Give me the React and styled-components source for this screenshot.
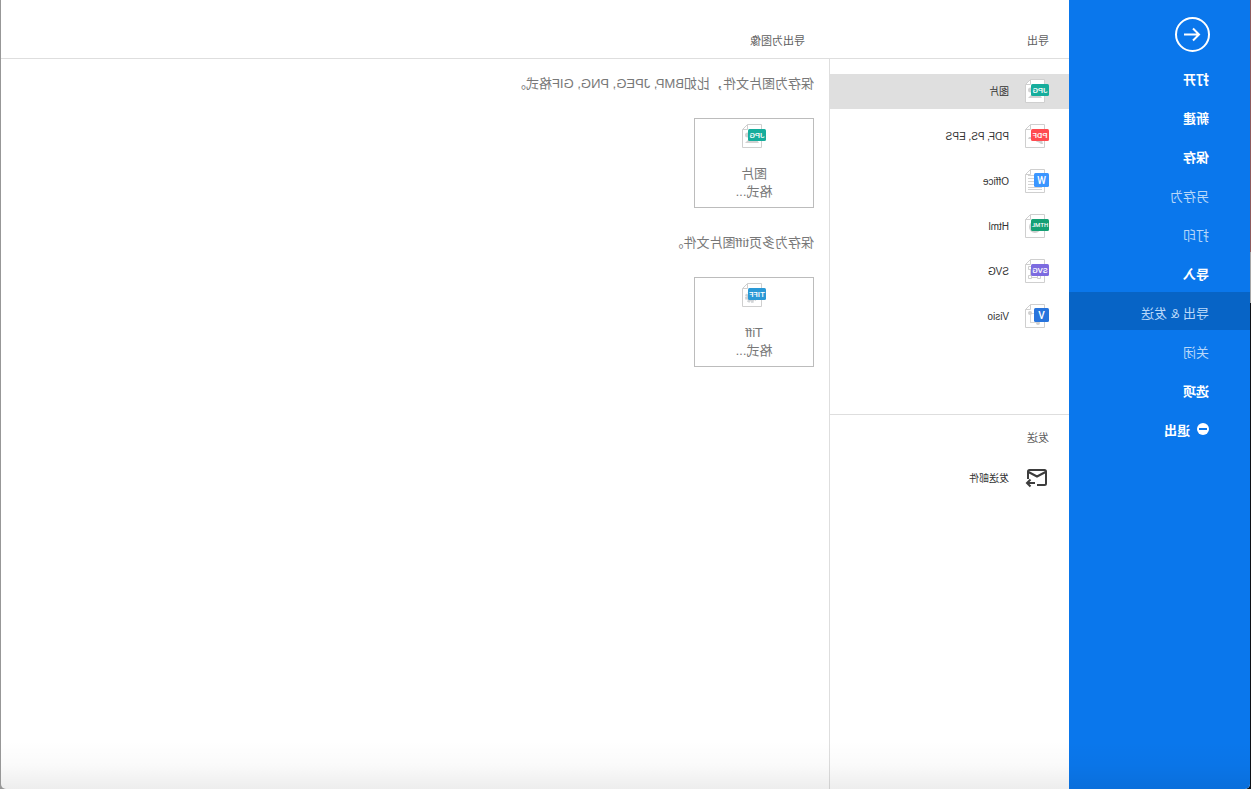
import React, { useState } from 'react';
import styled, { createGlobalStyle } from 'styled-components';

const Global = createGlobalStyle`
    * {
        box-sizing: border-box;
    }
    body {
        margin: 0;
        background: #fff;
        font-family: "Liberation Sans", "Noto Sans CJK SC", sans-serif;
        font-variant-ligatures: none;
    }
    button {
        margin: 0;
        border: 0;
        background: none;
        font-family: inherit;
        text-align: left;
        cursor: pointer;
    }
    h2, p {
        margin: 0;
        font-weight: 400;
    }
`

// the whole window is flipped horizontally
const Desktop = styled.div`
    min-height: 100vh;
    padding: 0 1px;
    display: flex;
    transform: scaleX(-1);
    background:
        linear-gradient(#8e5a5c 0 252px, #a5a5a5 252px 303px, #101216 303px) left / 50% 100% no-repeat,
        #979797;
`

const Window = styled.div`
    flex: 1;
    display: grid;
    grid-template-columns: 181px 240px 1fr;
    grid-template-rows: 59px 1fr;
    position: relative;
    background: #fff;
    border-radius: 0 0 5px 5px;
    overflow: hidden;

    &::after {
        content: "";
        position: absolute;
        left: 0;
        right: 0;
        bottom: 0;
        height: 48px;
        background: linear-gradient(rgba(0, 0, 0, 0), rgba(0, 0, 0, 0.02) 50%, rgba(0, 0, 0, 0.07));
        pointer-events: none;
    }
`

const Sidebar = styled.nav`
    grid-row: 1 / 3;
    padding-top: 17px;
    background: #0a77ec;
    display: flex;
    flex-direction: column;
`

const BackButton = styled.button`
    width: 36px;
    height: 36px;
    margin: 0 0 5px 40px;
    padding: 0;

    svg {
        display: block;
    }
`

const Menu = styled.ul`
    list-style: none;
    margin: 0;
    padding: 0;
    display: flex;
    flex-direction: column;
    gap: 1px;
`

const MenuButton = styled.button`
    width: 100%;
    height: 38px;
    padding: 6px 0 0 41px;
    display: flex;
    align-items: center;
    gap: 6px;
    font-size: 13px;
    line-height: 18px;
    font-weight: ${({ $strong }) => ($strong ? 700 : 400)};
    color: ${({ $strong }) => ($strong ? '#fff' : '#b9d8f9')};
    background: ${({ $active }) => ($active ? '#0764c6' : 'transparent')};
`

const HeadCell = styled.header`
    padding: ${({ $wide }) => ($wide ? '33px 24px 0' : '33px 20px 0')};
    border-bottom: 1px solid #dedede;
`

const Heading = styled.h2`
    font-size: 11px;
    line-height: 16px;
    color: #606060;
`

const Column = styled.aside`
    border-right: 1px solid #dedede;
`

const ExportSection = styled.section`
    min-height: 355px;
    padding-top: 15px;
    display: flex;
    flex-direction: column;
    gap: 10px;
`

const SendSection = styled.section`
    border-top: 1px solid #dedede;
    padding-top: 15px;
    display: flex;
    flex-direction: column;
    gap: 15px;

    ${Heading} {
        padding-left: 20px;
    }
`

const Row = styled.button`
    width: 100%;
    height: 35px;
    padding: 0 20px 1px;
    display: flex;
    align-items: center;
    gap: 16px;
    font-size: 10px;
    line-height: 17px;
    color: #333;
    background: ${({ $active }) => ($active ? '#dfdfdf' : 'transparent')};
`

const Content = styled.main`
    padding: 16px 15px;
`

const Group = styled.section`
    margin-bottom: 26px;
`

const Description = styled.p`
    margin-bottom: 25px;
    font-size: 13px;
    line-height: 18px;
    color: #787878;
`

const Card = styled.button`
    width: 120px;
    height: 90px;
    padding: 5px 0 0;
    border: 1px solid #bcbcbc;
    display: flex;
    flex-direction: column;
    align-items: center;
    gap: 17px;
    font-size: 13px;
    line-height: 18px;
    text-align: center;
    color: #787878;
`

const CardLabel = styled.span`
    white-space: pre-line;
`

const BadgeText = styled.text`
    font-family: Roboto, sans-serif;
    font-size: ${({ $size }) => $size}px;
    font-weight: 500;
    text-anchor: middle;
    fill: #fff;
`

const badges = {
    jpg: { text: 'JPG', color: '#16ad9c', size: 8 },
    pdf: { text: 'PDF', color: '#ff4b50', size: 8 },
    word: { text: 'W', color: '#3b96ff', size: 10, square: true },
    html: { text: 'HTML', color: '#15a074', size: 6 },
    svg: { text: 'SVG', color: '#7c6be0', size: 8 },
    visio: { text: 'V', color: '#2874dc', size: 10, square: true },
    tiff: { text: 'TIFF', color: '#2a99d6', size: 8 },
};

const drawings = {
    jpg: (
        <g fill="#d2d2d2">
            <path d="M7 19l2-3h9l3 3z" />
            <circle cx="18.500" cy="11" r="2.500" />
        </g>
    ),
    pdf: (
        <g fill="#cfcfcf">
            <path d="M17 13h3l1 2h-4z" />
            <path d="M6 20l1-4h5l1 1.500-3 1-2 1.500z" />
        </g>
    ),
    word: <path d="M14 6.500h7M14 9.500h7M14 12.500h7M14 15.500h7M7 18.500h14M7 20.500h14" stroke="#d4d4d4" />,
    html: <circle cx="14" cy="13" r="5" fill="#e4e4e4" stroke="#cfcfcf" strokeWidth="2" />,
    svg: (
        <g fill="#fff" stroke="#cfcfcf">
            <path d="M9 18.500h10M18.500 8v10" />
            <path d="M8.500 16.500h3v3h-3zM17.500 16.500h3v3h-3zM17.500 7.500h3v3h-3z" />
        </g>
    ),
    visio: (
        <g fill="#cfcfcf">
            <path d="M18.500 9v9M12 18.500h7M12 9.500h7" fill="none" stroke="#d8d8d8" />
            <circle cx="19" cy="9" r="2" />
            <circle cx="11" cy="19" r="2" />
        </g>
    ),
    tiff: (
        <g>
            <circle cx="15" cy="14" r="5" fill="none" stroke="#cfd2d5" strokeWidth="2" strokeDasharray="2.500 1.430" />
            <circle cx="15" cy="14" r="4.500" fill="#cfd2d5" />
        </g>
    ),
};

const FileIcon = ({ kind }) => {
    const { text, color, size, square } = badges[kind];
    return (
        <svg width="24" height="24" viewBox="0 0 24 24" aria-hidden="true">
            <path d="M4.500.500h14l5 5v18h-19z" fill="#fff" stroke="#cfcfcf" />
            <path d="M18.500.500v5h5" fill="none" stroke="#cfcfcf" />
            {drawings[kind]}
            <rect
                x="0"
                y={square ? 4 : 5}
                width={square ? 15 : 18}
                height={square ? 14 : 12}
                rx="1.500"
                fill={color}
            />
            <BadgeText $size={size} x={square ? 7.5 : 9} y={square ? 14.5 : size === 6 ? 13 : 14}>
                {text}
            </BadgeText>
        </svg>
    );
};

const BackIcon = () => (
    <svg width="36" height="36" viewBox="0 0 36 36" fill="none" stroke="#fff" strokeWidth="2" aria-hidden="true">
        <circle cx="17.500" cy="17.500" r="16.500" />
        <path d="M26 17.500H11M17 11.500l-6 6 6 6" />
    </svg>
);

const ExitIcon = () => (
    <svg width="13" height="16" viewBox="0 0 13 16" aria-hidden="true">
        <circle cx="6" cy="6" r="6" fill="#fff" />
        <path d="M2 6h8" stroke="#0a77ec" strokeWidth="2" />
    </svg>
);

const MailIcon = () => (
    <svg width="24" height="24" viewBox="0 0 24 24" fill="none" stroke="#3d3d3d" strokeWidth="2" aria-hidden="true">
        <path d="M21 13V5.500Q21 4 19.500 4h-15Q3 4 3 5.500v12Q3 19 4.500 19H12" />
        <path d="M3.500 6l8.500 4.500L20.500 6" />
        <path d="M14 17h8M18.500 13.500L22 17l-3.500 3.500" />
    </svg>
);

const menu = [
    { label: '打开', strong: true },
    { label: '新建', strong: true },
    { label: '保存', strong: true },
    { label: '另存为' },
    { label: '打印' },
    { label: '导入', strong: true },
    { label: '导出 & 发送', active: true },
    { label: '关闭' },
    { label: '选项', strong: true },
    { label: '退出', strong: true, icon: <ExitIcon /> },
];

const formats = [
    { kind: 'jpg', label: '图片' },
    { kind: 'pdf', label: 'PDF, PS, EPS' },
    { kind: 'word', label: 'Office' },
    { kind: 'html', label: 'Html' },
    { kind: 'svg', label: 'SVG' },
    { kind: 'visio', label: 'Visio' },
];

const groups = [
    { kind: 'jpg', description: '保存为图片文件，比如BMP, JPEG, PNG, GIF格式。', label: '图片\n格式...' },
    { kind: 'tiff', description: '保存为多页tiff图片文件。', label: 'Tiff\n格式...' },
];

const App = () => {
    const [format, setFormat] = useState('jpg');

    return (
        <Desktop>
            <Global />
            <Window>
                <Sidebar>
                    <BackButton type="button" aria-label="返回">
                        <BackIcon />
                    </BackButton>
                    <Menu>
                        {menu.map((v) => (
                            <li key={v.label}>
                                <MenuButton type="button" $strong={v.strong} $active={v.active}>
                                    {v.icon}
                                    {v.label}
                                </MenuButton>
                            </li>
                        ))}
                    </Menu>
                </Sidebar>
                <HeadCell>
                    <Heading>导出</Heading>
                </HeadCell>
                <HeadCell $wide>
                    <Heading>导出为图像</Heading>
                </HeadCell>
                <Column>
                    <ExportSection>
                        {formats.map((v) => (
                            <Row
                                type="button"
                                key={v.kind}
                                $active={v.kind === format}
                                onClick={() => setFormat(v.kind)}
                            >
                                <FileIcon kind={v.kind} />
                                {v.label}
                            </Row>
                        ))}
                    </ExportSection>
                    <SendSection>
                        <Heading>发送</Heading>
                        <Row type="button">
                            <MailIcon />
                            发送邮件
                        </Row>
                    </SendSection>
                </Column>
                <Content>
                    {groups.map((v) => (
                        <Group key={v.kind}>
                            <Description>{v.description}</Description>
                            <Card type="button">
                                <FileIcon kind={v.kind} />
                                <CardLabel>{v.label}</CardLabel>
                            </Card>
                        </Group>
                    ))}
                </Content>
            </Window>
        </Desktop>
    );
};

export default App;
